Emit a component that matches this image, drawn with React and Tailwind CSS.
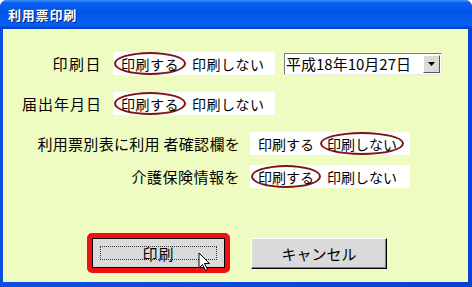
export default function App() {
  const font = { fontFamily: '"Noto Sans CJK JP", "Noto Sans", sans-serif' };
  const Oval = ({ children }) => (
    <span className="inline-flex items-center justify-center h-[23px] px-[5px] rounded-[50%] border-2 border-[#7c1418] leading-none">
      {children}
    </span>
  );
  const Plain = ({ children }) => (
    <span className="inline-flex items-center h-[21px] px-[6px] leading-none">{children}</span>
  );
  return (
    <div
      className="w-[472px] h-[287px] flex flex-col bg-[#0a3fd6] rounded-t-[7px] overflow-hidden text-black"
      style={font}
    >
      <div className="h-[29px] shrink-0 flex items-center pl-[8px] bg-[linear-gradient(180deg,#3d95ff_0%,#0a5ef0_10%,#0055e8_40%,#0660f4_85%,#0050e0_92%,#003cc8_100%)]">
        <span className="text-white text-[13px] font-bold tracking-[0.8px] [text-shadow:1px_1px_0_#0a1e70]">
          利用票印刷
        </span>
      </div>
      <div className="flex-1 flex pb-[5px] pl-[3px] pr-[4px] bg-[linear-gradient(90deg,#0d4fe0,#0842d8)]">
        <div className="flex-1 bg-[#eefcc2] flex flex-col pt-[23px] text-[15px]">
          {/* Row 1 */}
          <div className="flex items-center h-[23px]">
            <div className="w-[99px] text-right leading-none tracking-[1.5px]">印刷日</div>
            <div className="ml-[11px] w-[162px] h-[23px] bg-white flex items-center pl-[1px] text-[14px] tracking-[0.5px]">
              <Oval>印刷する</Oval>
              <Plain>印刷しない</Plain>
            </div>
            <div className="ml-[9px] w-[158px] h-[22px] bg-white flex items-center border border-t-[#7a7a7a] border-l-[#7a7a7a] border-r-[#e8e8e8] border-b-[#e8e8e8]">
              <span className="flex-1 pl-[1px] leading-none text-[15px]">平成18年10月27日</span>
              <span className="w-[17px] h-[18px] mr-[1px] bg-[#dcdcd6] border border-t-white border-l-white border-r-[#555] border-b-[#555] flex items-center justify-center">
                <svg width="7" height="4" viewBox="0 0 7 4">
                  <path d="M0 0h7L3.5 4z" fill="#000" />
                </svg>
              </span>
            </div>
          </div>
          {/* Row 2 */}
          <div className="flex items-center h-[23px] mt-[17px]">
            <div className="w-[99px] text-right leading-none tracking-[1px]">届出年月日</div>
            <div className="ml-[11px] w-[162px] h-[23px] bg-white flex items-center pl-[1px] text-[14px] tracking-[0.5px]">
              <Oval>印刷する</Oval>
              <Plain>印刷しない</Plain>
            </div>
          </div>
          {/* Row 3 */}
          <div className="flex items-center h-[23px] mt-[17px]">
            <div className="w-[237px] text-right leading-none tracking-[0.3px]">利用票別表に利用 者確認欄を</div>
            <div className="ml-[10px] w-[160px] h-[23px] bg-white flex items-center pl-[2px] text-[14px]">
              <Plain>印刷する</Plain>
              <Oval>印刷しない</Oval>
            </div>
          </div>
          {/* Row 4 */}
          <div className="flex items-center h-[23px] mt-[10px]">
            <div className="w-[237px] text-right leading-none tracking-[0.5px]">介護保険情報を</div>
            <div className="ml-[10px] w-[160px] h-[23px] bg-white flex items-center pl-[1px] text-[14px]">
              <Oval>印刷する</Oval>
              <Plain>印刷しない</Plain>
            </div>
          </div>
          {/* Buttons */}
          <div className="flex items-center mt-[45px] pl-[84px]">
            <div className="relative w-[143px] h-[40px] rounded-[5px] border-[5px] border-[#f01010] bg-[#f01010]">
              <div className="w-full h-full bg-[#dadada] border border-black flex items-center justify-center">
                <div className="absolute inset-[8px] border border-dotted border-[#333]" />
                <span className="leading-none tracking-[1px]">印刷</span>
              </div>
              <svg className="absolute left-[106px] top-[14px]" width="13" height="20" viewBox="0 0 13 20">
                <path d="M1 1v15l3.5-3.5 3 6 2-1-3-6h5z" fill="#fff" stroke="#000" strokeWidth="1" strokeLinejoin="miter" />
              </svg>
            </div>
            <div className="ml-[21px] w-[136px] h-[31px] bg-[#dadada] border border-t-white border-l-white border-r-black border-b-black shadow-[inset_-1px_-1px_0_#808080] flex items-center justify-center">
              <span className="leading-none">キャンセル</span>
            </div>
          </div>
        </div>
      </div>
    </div>
  );
}
